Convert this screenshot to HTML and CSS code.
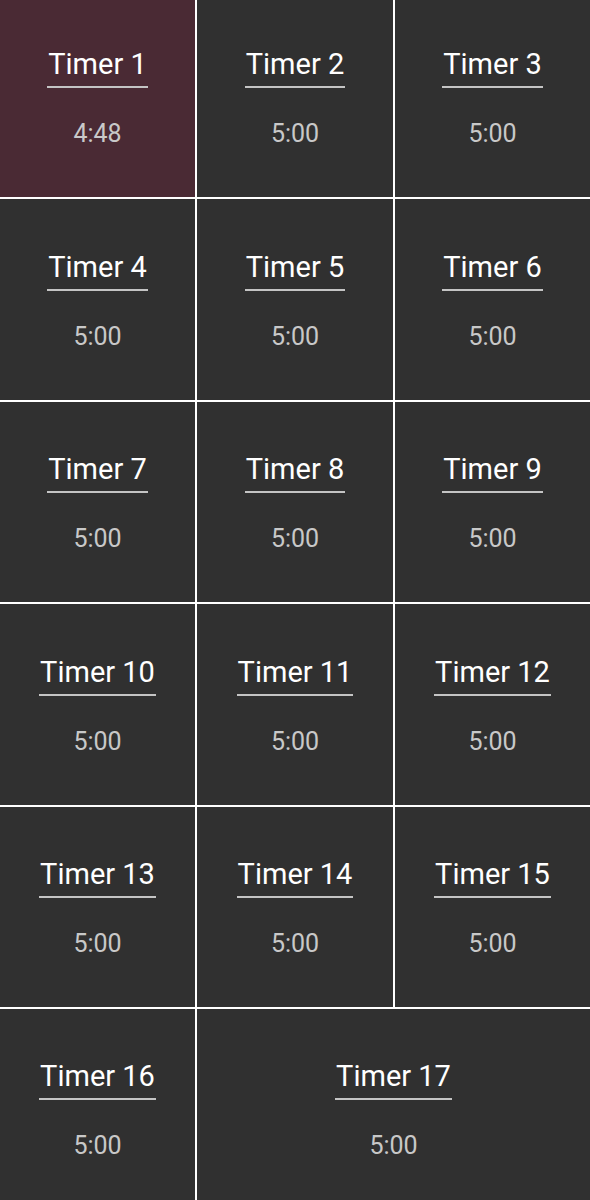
FILE: index.html
```html
<!DOCTYPE html>
<html>
<head>
<meta charset="utf-8">
<link rel="stylesheet" href="styles.css">
</head>
<body>
<div class="grid">
  <div class="cell active"><div class="title">Timer 1</div><div class="time">4:48</div></div>
  <div class="cell"><div class="title">Timer 2</div><div class="time">5:00</div></div>
  <div class="cell"><div class="title">Timer 3</div><div class="time">5:00</div></div>
  <div class="cell"><div class="title">Timer 4</div><div class="time">5:00</div></div>
  <div class="cell"><div class="title">Timer 5</div><div class="time">5:00</div></div>
  <div class="cell"><div class="title">Timer 6</div><div class="time">5:00</div></div>
  <div class="cell"><div class="title">Timer 7</div><div class="time">5:00</div></div>
  <div class="cell"><div class="title">Timer 8</div><div class="time">5:00</div></div>
  <div class="cell"><div class="title">Timer 9</div><div class="time">5:00</div></div>
  <div class="cell"><div class="title">Timer 10</div><div class="time">5:00</div></div>
  <div class="cell"><div class="title">Timer 11</div><div class="time">5:00</div></div>
  <div class="cell"><div class="title">Timer 12</div><div class="time">5:00</div></div>
  <div class="cell"><div class="title">Timer 13</div><div class="time">5:00</div></div>
  <div class="cell"><div class="title">Timer 14</div><div class="time">5:00</div></div>
  <div class="cell"><div class="title">Timer 15</div><div class="time">5:00</div></div>
  <div class="cell"><div class="title">Timer 16</div><div class="time">5:00</div></div>
  <div class="cell wide"><div class="title">Timer 17</div><div class="time">5:00</div></div>
</div>
</body>
</html>
```
FILE: styles.css
```css
html, body {
  margin: 0;
  padding: 0;
  background: #ffffff;
  height: 1200px;
  overflow: hidden;
}
.grid {
  display: grid;
  grid-template-columns: 195px 196px 195px;
  grid-template-rows: 200px 201px 200px 201px 200px 200px;
  gap: 2px;
  width: 590px;
  margin-top: -3px;
  font-family: Roboto, "Noto Sans", sans-serif;
}
.cell {
  background: #303030;
  display: flex;
  flex-direction: column;
  align-items: center;
  justify-content: center;
  padding-top: 2px;
  box-sizing: border-box;
}
.cell.active {
  background: #4a2a34;
}
.cell.wide {
  grid-column: span 2;
}
.title {
  color: #ffffff;
  font-size: 29px;
  line-height: 34px;
  padding: 0 1px 5px;
  border-bottom: 2px solid #c4c4c4;
}
.time {
  color: #c8c8c8;
  font-size: 25px;
  line-height: 30px;
  margin-top: 31px;
}
```
